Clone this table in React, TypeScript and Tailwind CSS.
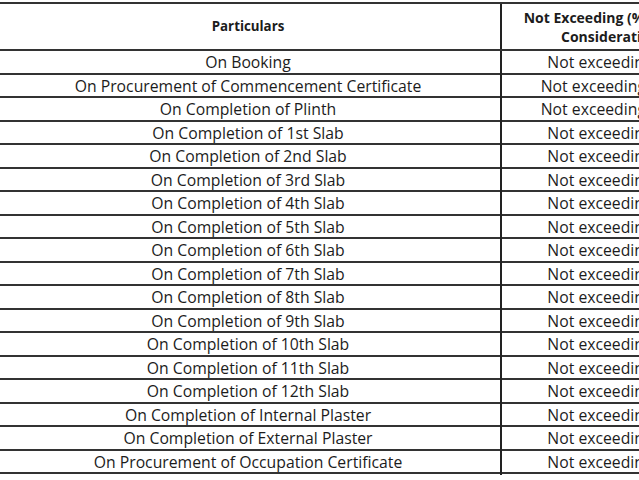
import React from 'react';

type Row = { stage: string; limit: string };

const rows: Row[] = [
  { stage: 'On Booking', limit: 'Not exceeding 10%' },
  { stage: 'On Procurement of Commencement Certificate', limit: 'Not exceeding 30.5%' },
  { stage: 'On Completion of Plinth', limit: 'Not exceeding 45.5%' },
  { stage: 'On Completion of 1st Slab', limit: 'Not exceeding 48%' },
  { stage: 'On Completion of 2nd Slab', limit: 'Not exceeding 50%' },
  { stage: 'On Completion of 3rd Slab', limit: 'Not exceeding 52%' },
  { stage: 'On Completion of 4th Slab', limit: 'Not exceeding 54%' },
  { stage: 'On Completion of 5th Slab', limit: 'Not exceeding 56%' },
  { stage: 'On Completion of 6th Slab', limit: 'Not exceeding 58%' },
  { stage: 'On Completion of 7th Slab', limit: 'Not exceeding 60%' },
  { stage: 'On Completion of 8th Slab', limit: 'Not exceeding 62%' },
  { stage: 'On Completion of 9th Slab', limit: 'Not exceeding 64%' },
  { stage: 'On Completion of 10th Slab', limit: 'Not exceeding 66%' },
  { stage: 'On Completion of 11th Slab', limit: 'Not exceeding 68%' },
  { stage: 'On Completion of 12th Slab', limit: 'Not exceeding 70%' },
  { stage: 'On Completion of Internal Plaster', limit: 'Not exceeding 75%' },
  { stage: 'On Completion of External Plaster', limit: 'Not exceeding 80%' },
  { stage: 'On Procurement of Occupation Certificate', limit: 'Not exceeding 95%' },
];

export default function App() {
  return (
    <div className="w-[639px] h-[480px] overflow-hidden bg-white text-[#1c1c1c] font-['Open_Sans',sans-serif] text-[15.75px]">
      <div className="ml-[-4px] mt-[2px] w-[730px] border-t-2 border-[#333]">
        <div className="grid grid-cols-[506px_224px] h-[47px] border-b-2 border-[#333] font-bold text-[14px] leading-[19px]">
          <div className="flex items-center justify-center border-r-2 border-[#222] text-[13.3px]">Particulars</div>
          <div className="flex flex-col items-center justify-center text-center pr-[3px]">
            <span>Not Exceeding (% of Total</span>
            <span>Consideration)</span>
          </div>
        </div>
        {rows.map((row, i) => (
          <div
            key={i}
            className={`grid grid-cols-[506px_224px] border-b-2 border-[#333] ${i % 2 === 0 ? 'h-[24px]' : 'h-[23px]'}`}
          >
            <div className="flex items-center justify-center border-r-2 border-[#222]">{row.stage}</div>
            <div className="flex items-center justify-center pl-[7px]">{row.limit}</div>
          </div>
        ))}
      </div>
    </div>
  );
}
